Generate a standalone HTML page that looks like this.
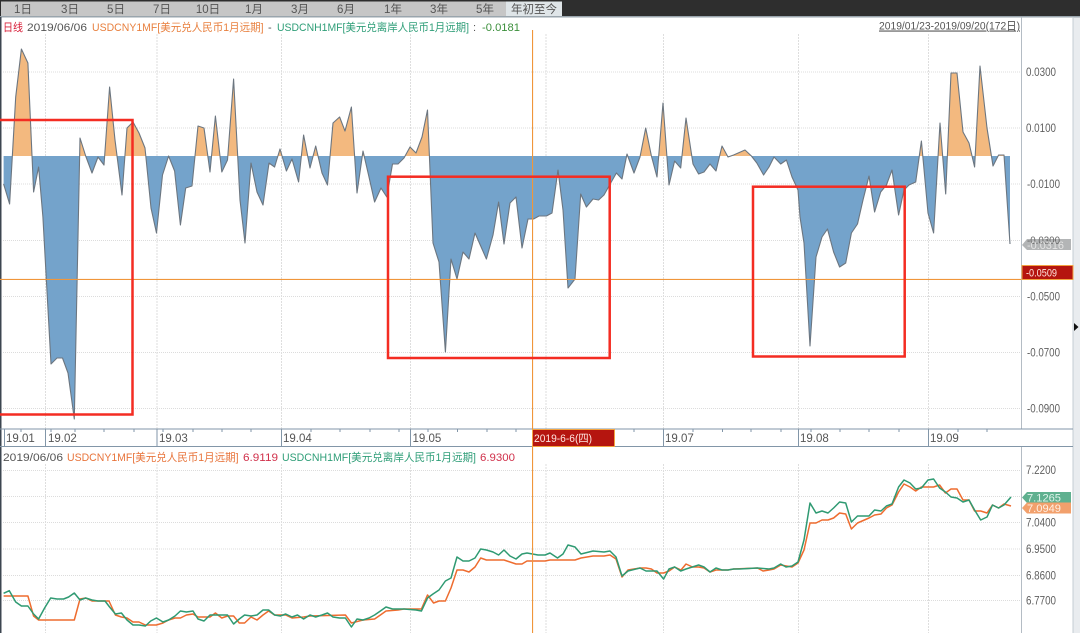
<!DOCTYPE html>
<html><head><meta charset="utf-8">
<style>
html,body{margin:0;padding:0;background:#fff;width:1080px;height:633px;overflow:hidden}
svg{display:block;filter:blur(0.35px)}
text{font-family:"Liberation Sans","Noto Sans CJK SC",sans-serif;font-size:11px}
.g{stroke:#dcdcdc;stroke-width:1;stroke-dasharray:1 1;fill:none}
.v{stroke:#dedede;stroke-width:1;stroke-dasharray:2 1;fill:none}
.ax{fill:#5f5f5f}
.ax text{font-size:11.5px}
.tab{fill:#555;text-anchor:middle}
.tab text{font-size:11.5px}
.xl{fill:#555}
.xl text{font-size:11.5px}
</style></head><body>
<svg width="1080" height="633" viewBox="0 0 1080 633" xmlns="http://www.w3.org/2000/svg">
<defs>
<clipPath id="up"><rect x="0" y="0" width="1080" height="156"/></clipPath>
<clipPath id="dn"><rect x="0" y="156" width="1080" height="300"/></clipPath>
</defs>
<rect width="1080" height="633" fill="#fff"/>
<rect x="1073" y="17" width="7" height="616" fill="#e9ecef"/>
<rect x="0" y="0" width="1080" height="17" fill="#2e2e2e"/>
<rect x="1" y="1.5" width="505" height="14.5" fill="#c6c6c6"/>
<rect x="506" y="1.5" width="56" height="14.5" fill="#dfe5e8"/>
<rect x="0" y="16" width="1080" height="1.5" fill="#9aa5ad"/>
<rect x="0" y="17" width="1.5" height="616" fill="#3c4650"/>
<g class="tab">
<text x="23" y="13">1日</text><text x="70" y="13">3日</text><text x="116" y="13">5日</text><text x="162" y="13">7日</text><text x="208" y="13">10日</text><text x="254" y="13">1月</text><text x="300" y="13">3月</text><text x="346" y="13">6月</text><text x="393" y="13">1年</text><text x="439" y="13">3年</text><text x="485" y="13">5年</text><text x="534" y="13">年初至今</text>
</g>

<!-- grids -->
<g class="g">
<path d="M3 72H1021M3 128H1021M3 184H1021M3 240.5H1021M3 296.5H1021M3 352.5H1021M3 408.5H1021"/>
<path d="M3 470.5H1021M3 496.5H1021M3 522.5H1021M3 549H1021M3 575.5H1021M3 600.5H1021"/>
</g>
<g class="v">
<path d="M45.5 34V429M157 34V429M281.5 34V429M410.5 34V429M546 34V429M663.5 34V429M798.5 34V429M928.5 34V429"/>
<path d="M45.5 464V633M157 464V633M281.5 464V633M410.5 464V633M546 464V633M663.5 464V633M798.5 464V633M928.5 464V633"/>
</g>

<!-- area chart -->
<g>
<polygon clip-path="url(#up)" fill="#f3b97f" points="3.6,156 3.6,184 9.6,204 15.7,97 21.4,49 27.9,63 33.6,192 38.6,167 42.9,217 51,364 57,358 62.5,358 68,373 74.3,419 80,138 85.7,156 92,173 98,157 104,165 109.6,87 115,140 122,195 127,128 133,122 139,133 145,148 151,208 156.5,233 162.5,175 168.6,156 174.6,171 180.4,225 185.7,188 192,186 198,126 204,128 210,172 215.4,116 221.8,172 227.5,160 233.6,79 240,200 245,243 251,163 257,192 263,205 269,163 274.6,167 280,149 286.4,171 292,159 298.6,182 303.6,135 310,168 315.7,146 322,173 327.5,185 333,123 339.6,117 345,131 351.4,107 357,193 363,151 369,177 374.6,202 381,188 386.8,197 392.5,164 398,164 404,158 410,147 416,153 422,137 427.5,110 433,243 439,262 445.4,352 451,259 457,279 463,252 469,259 475,233 480.7,246 486.4,259 493,235 498.6,202 504,244 510,203 516,197 522,248 528,219 533.6,219 539,216 546.4,216 552,213 558,170 563,210 568,288 575,279 580.7,194 586.4,207 593,199 598.6,200 604,195 610.7,183 616.4,173 622,179 627,154 634,173 640,157 645.7,128 651.4,156 657,177 663,103 669,185 674.6,161 680.7,168 686,118 693,164 698.6,174 704,172 710,164 716,171 722,146 728,157 733.6,155 745,150 751.4,156 756.8,163 763.6,175 769,167 774,157 780.7,164 786.4,160 792,177 798,190 800,217 804,243 810,346 816,257 822,237 827.5,229 833.6,252 839.6,267 845.7,263 851.4,233 857.5,224 863,200 869,176 874.6,212 880.7,192 886.4,185 892,170 898.6,215 904,190 909,185 915.7,182 921.4,141 928,213 933.6,233 940,123 945.7,194 951,73 957,73 963,132 969,143 974.6,167 980,66 987,128 993,166 998.6,155 1004,155 1010,244 1010,156"/>
<polygon clip-path="url(#dn)" fill="#74a3cb" points="3.6,156 3.6,184 9.6,204 15.7,97 21.4,49 27.9,63 33.6,192 38.6,167 42.9,217 51,364 57,358 62.5,358 68,373 74.3,419 80,138 85.7,156 92,173 98,157 104,165 109.6,87 115,140 122,195 127,128 133,122 139,133 145,148 151,208 156.5,233 162.5,175 168.6,156 174.6,171 180.4,225 185.7,188 192,186 198,126 204,128 210,172 215.4,116 221.8,172 227.5,160 233.6,79 240,200 245,243 251,163 257,192 263,205 269,163 274.6,167 280,149 286.4,171 292,159 298.6,182 303.6,135 310,168 315.7,146 322,173 327.5,185 333,123 339.6,117 345,131 351.4,107 357,193 363,151 369,177 374.6,202 381,188 386.8,197 392.5,164 398,164 404,158 410,147 416,153 422,137 427.5,110 433,243 439,262 445.4,352 451,259 457,279 463,252 469,259 475,233 480.7,246 486.4,259 493,235 498.6,202 504,244 510,203 516,197 522,248 528,219 533.6,219 539,216 546.4,216 552,213 558,170 563,210 568,288 575,279 580.7,194 586.4,207 593,199 598.6,200 604,195 610.7,183 616.4,173 622,179 627,154 634,173 640,157 645.7,128 651.4,156 657,177 663,103 669,185 674.6,161 680.7,168 686,118 693,164 698.6,174 704,172 710,164 716,171 722,146 728,157 733.6,155 745,150 751.4,156 756.8,163 763.6,175 769,167 774,157 780.7,164 786.4,160 792,177 798,190 800,217 804,243 810,346 816,257 822,237 827.5,229 833.6,252 839.6,267 845.7,263 851.4,233 857.5,224 863,200 869,176 874.6,212 880.7,192 886.4,185 892,170 898.6,215 904,190 909,185 915.7,182 921.4,141 928,213 933.6,233 940,123 945.7,194 951,73 957,73 963,132 969,143 974.6,167 980,66 987,128 993,166 998.6,155 1004,155 1010,244 1010,156"/>
<polyline fill="none" stroke="#6c7680" stroke-width="1.1" stroke-linejoin="round" points="3.6,184 9.6,204 15.7,97 21.4,49 27.9,63 33.6,192 38.6,167 42.9,217 51,364 57,358 62.5,358 68,373 74.3,419 80,138 85.7,156 92,173 98,157 104,165 109.6,87 115,140 122,195 127,128 133,122 139,133 145,148 151,208 156.5,233 162.5,175 168.6,156 174.6,171 180.4,225 185.7,188 192,186 198,126 204,128 210,172 215.4,116 221.8,172 227.5,160 233.6,79 240,200 245,243 251,163 257,192 263,205 269,163 274.6,167 280,149 286.4,171 292,159 298.6,182 303.6,135 310,168 315.7,146 322,173 327.5,185 333,123 339.6,117 345,131 351.4,107 357,193 363,151 369,177 374.6,202 381,188 386.8,197 392.5,164 398,164 404,158 410,147 416,153 422,137 427.5,110 433,243 439,262 445.4,352 451,259 457,279 463,252 469,259 475,233 480.7,246 486.4,259 493,235 498.6,202 504,244 510,203 516,197 522,248 528,219 533.6,219 539,216 546.4,216 552,213 558,170 563,210 568,288 575,279 580.7,194 586.4,207 593,199 598.6,200 604,195 610.7,183 616.4,173 622,179 627,154 634,173 640,157 645.7,128 651.4,156 657,177 663,103 669,185 674.6,161 680.7,168 686,118 693,164 698.6,174 704,172 710,164 716,171 722,146 728,157 733.6,155 745,150 751.4,156 756.8,163 763.6,175 769,167 774,157 780.7,164 786.4,160 792,177 798,190 800,217 804,243 810,346 816,257 822,237 827.5,229 833.6,252 839.6,267 845.7,263 851.4,233 857.5,224 863,200 869,176 874.6,212 880.7,192 886.4,185 892,170 898.6,215 904,190 909,185 915.7,182 921.4,141 928,213 933.6,233 940,123 945.7,194 951,73 957,73 963,132 969,143 974.6,167 980,66 987,128 993,166 998.6,155 1004,155 1010,244"/>
</g>

<!-- header text -->
<text x="3" y="31" fill="#d8203a" textLength="20" lengthAdjust="spacingAndGlyphs">日线</text>
<text x="27" y="31" fill="#555" textLength="60" lengthAdjust="spacingAndGlyphs">2019/06/06</text>
<text x="92" y="31" fill="#e8803f" textLength="171.5" lengthAdjust="spacingAndGlyphs">USDCNY1MF[美元兑人民币1月远期]</text>
<text x="268" y="31" fill="#555">-</text>
<text x="277" y="31" fill="#2f9e78" textLength="192" lengthAdjust="spacingAndGlyphs">USDCNH1MF[美元兑离岸人民币1月远期]</text>
<text x="473" y="31" fill="#555">:</text>
<text x="482" y="31" fill="#3b8f3b" textLength="38" lengthAdjust="spacingAndGlyphs">-0.0181</text>
<text x="879" y="29.5" fill="#555" textLength="141" lengthAdjust="spacingAndGlyphs" text-decoration="underline">2019/01/23-2019/09/20(172日)</text>

<!-- axes -->
<path d="M1021.5 17V429M1021.5 446V633" stroke="#b4bcc4" stroke-width="1" fill="none"/>
<path d="M1073 17V633" stroke="#c4ccd3" stroke-width="1" fill="none"/>
<path d="M0 429H1073M0 446.5H1073" stroke="#8296a8" stroke-width="1" fill="none"/>
<path d="M4.5 429V446M45.5 429V446M157 429V446M281.5 429V446M410.5 429V446M663.5 429V446M798.5 429V446M928.5 429V446" stroke="#8296a8" stroke-width="1" fill="none"/>
<path d="M21 429v3M51 429v3M75 429v3M104 429v3M134 429v3M163 429v3M193 429v3M222 429v3M251 429v3M311 429v3M340 429v3M370 429v3M399 429v3M428 429v3M457.5 429v3M487 429v3M516 429v3M634 429v3M693 429v3M722.5 429v3M751 429v3M781 429v3M811 429v3M840 429v3M869 429v3M899 429v3M958 429v3M987 429v3" stroke="#8296a8" stroke-width="1" fill="none"/>
<g class="xl">
<text x="6" y="442">19.01</text><text x="48" y="442">19.02</text><text x="159" y="442">19.03</text><text x="283" y="442">19.04</text><text x="412.5" y="442">19.05</text><text x="665" y="442">19.07</text><text x="800" y="442">19.08</text><text x="930" y="442">19.09</text>
</g>
<g class="ax">
<text x="1026" y="76" textLength="30" lengthAdjust="spacingAndGlyphs">0.0300</text>
<text x="1026" y="132" textLength="30" lengthAdjust="spacingAndGlyphs">0.0100</text>
<text x="1027" y="188" textLength="33" lengthAdjust="spacingAndGlyphs">-0.0100</text>
<text x="1027" y="300.5" textLength="33" lengthAdjust="spacingAndGlyphs">-0.0500</text>
<text x="1027" y="356.5" textLength="33" lengthAdjust="spacingAndGlyphs">-0.0700</text>
<text x="1027" y="412.5" textLength="33" lengthAdjust="spacingAndGlyphs">-0.0900</text>
<text x="1026" y="474" textLength="30" lengthAdjust="spacingAndGlyphs">7.2200</text>
<text x="1026" y="526.5" textLength="30" lengthAdjust="spacingAndGlyphs">7.0400</text>
<text x="1026" y="553" textLength="30" lengthAdjust="spacingAndGlyphs">6.9500</text>
<text x="1026" y="579.5" textLength="30" lengthAdjust="spacingAndGlyphs">6.8600</text>
<text x="1026" y="604.5" textLength="30" lengthAdjust="spacingAndGlyphs">6.7700</text>
</g>

<!-- lower header -->
<text x="3" y="461" fill="#555" textLength="60" lengthAdjust="spacingAndGlyphs">2019/06/06</text>
<text x="67" y="461" fill="#e8743b" textLength="171.5" lengthAdjust="spacingAndGlyphs">USDCNY1MF[美元兑人民币1月远期]</text>
<text x="243" y="461" fill="#d0304a" textLength="35" lengthAdjust="spacingAndGlyphs">6.9119</text>
<text x="282" y="461" fill="#2f9e78" textLength="194" lengthAdjust="spacingAndGlyphs">USDCNH1MF[美元兑离岸人民币1月远期]</text>
<text x="480" y="461" fill="#d0304a" textLength="35" lengthAdjust="spacingAndGlyphs">6.9300</text>

<!-- lines -->
<polyline fill="none" stroke="#ee6c2f" stroke-width="1.5" stroke-linejoin="round" points="3.6,596 27.9,596 33.6,616 38.6,620 74.3,620 80,599 85.7,598 92,601 109,601 115.4,615 121.4,617 127,618 133,622 139,622 145.4,625 156.4,625 163,623 168.6,620 175,618 180.4,618 186.4,615 193,614 198,617 210,617 215.4,613 221.8,618 227.5,616 233.6,616 239.3,623 244.6,623 251,617 257,620 263,615 268.6,611 274.6,615 285.7,615 292,618 303.6,617 310,616 345.4,615 351.4,623 363,620 374.6,619 380.4,615 386,611 398,610 404,609 421.4,609 427.5,595 433.6,603 439,601 445.4,601 451,588 457,570 463,570 469,572 475,567 480.7,558 486.4,560 504,560 516,564 522,564 527,561 545,561 550,560 575,560 581,558 593,556 604,556 610,555 616,559 622,577 628,570 640,568 646,568 651.4,569 657,573 663.6,573 669,571 674.6,567 681,570 686,564 692.5,567 698.6,567 704,568 710,572 716,570 728,570 733.6,569 757.5,568 763,571 769,570 774,569 780.7,565 792,567 798,563 804,550 810,523 816,523 822,520 828,520 833.6,518 839.6,513 845.7,514 851.4,529 857.5,523 869,518 874.6,515 881,514 886.4,508 892,505 898.6,492 904,484 910,487 915.7,491 921.4,487 933.6,487 939.6,485 945.4,493 951,489 957,489 963,500 969,500 974.6,511 980.7,511 987,513 992.5,505 998.6,508 1004,504 1011,506"/>
<polyline fill="none" stroke="#2f9a72" stroke-width="1.5" stroke-linejoin="round" points="3.6,593.3 9.3,590.7 15.7,602 21.4,606 27.9,606 33.6,614 38.6,619 44.6,608 50.7,598 57,599 63.6,599 68.6,597 74.3,593 80,600 85.7,598 92,600 98,601 105,601 109.6,607 115.4,614 121.4,613 127,620 133,625 139,625 145.4,626 150.7,621 156.4,618 163,622 168.6,620 175,616 180.4,611 186.4,612 193,611 198,619 204,621 210,615 216,615 227.5,615 233.6,624 239.3,619 244.6,615 251,616 257,615 263,610 268.6,610 274.6,615 280.4,616 285.7,614 292,617 297.5,615 303.6,619 310,615 315.7,617 322,615 327.5,613 333,617 339.6,618 345.4,618 351.4,627 357,619 363,620 369,618 374.6,615 380.4,611 386,607 392.5,609 404,609 416,610 421.4,611 427.5,598 433,594 439,590 445.4,581 451,578 457,557 463,561 469,561 475,558 480.7,549 486.4,550 493,552 498.6,555 504,550 510,556 516,559 522,554 527,553 538,555 545,555 550,553 557.5,558 563,554 568,545 575,547 581,554 593,551 604,552 610,551 616,557 622,576 628,571 640,568 646,571 657,571 663.6,579 669,569 674.6,567 680.7,571 686,569 698.6,565 704,567 710,572 716,568 722,570 728,570 733.6,569 739.6,569 757.5,568 769,569 774,568 780.7,564 786,567 792,566 798,562 804,540 810,503 816,513 822,511 828,513 833.6,508 839.6,502 845.7,503 851.4,522 857.5,516 869,516 874.6,510 881,511 886.4,506 892,504 898.6,487 904,480 910,483 915.7,489 921.4,488 928,480 933.6,479 939.6,488 945.4,492 951,497 957,498 963,502 969,500 974.6,510 980.7,520 987,517 992.5,505 998.6,508 1004,505 1011,497"/>

<!-- crosshair -->
<rect x="532" y="30" width="1.1" height="603" fill="#f0963a"/>
<rect x="0" y="278.9" width="1021" height="1.1" fill="#f0963a"/>

<!-- red boxes -->
<g fill="none" stroke="#f42c22" stroke-width="2.5">
<rect x="-2" y="120" width="134.5" height="294.5"/>
<rect x="388" y="176.7" width="221.7" height="181.3"/>
<rect x="753" y="186.7" width="151.7" height="169.8"/>
</g>

<!-- flags -->
<rect x="532.5" y="429.5" width="82" height="17" fill="#b5150f" stroke="#f2a341" stroke-width="1"/>
<text x="534" y="442" fill="#ffe6e0" textLength="58" lengthAdjust="spacingAndGlyphs">2019-6-6(四)</text>
<path d="M1022 245l5-6h44v11h-44z" fill="#b3b5b6"/>
<text x="1027" y="244" fill="#666" textLength="33" lengthAdjust="spacingAndGlyphs">-0.0300</text>
<text x="1027" y="249" fill="#e4e4e4" textLength="37" lengthAdjust="spacingAndGlyphs">-0.0316</text>
<rect x="1022" y="265.5" width="51" height="14" fill="#b5150f" stroke="#f2a341" stroke-width="1"/>
<text x="1026" y="276.5" fill="#ffe6e0" textLength="31" lengthAdjust="spacingAndGlyphs">-0.0509</text>
<path d="M1022 497.5l5-5.5h44v11h-44z" fill="#5fb08f"/>
<path d="M1022 508l5-5.5h44v11h-44z" fill="#f2a06c"/>
<text x="1027" y="501.5" fill="#dff3ea" textLength="34" lengthAdjust="spacingAndGlyphs">7.1265</text>
<text x="1027" y="512" fill="#fff0e4" textLength="34" lengthAdjust="spacingAndGlyphs">7.0949</text>
<path d="M1074 323l4.5 4-4.5 4z" fill="#111"/>
</svg>
</body></html>
